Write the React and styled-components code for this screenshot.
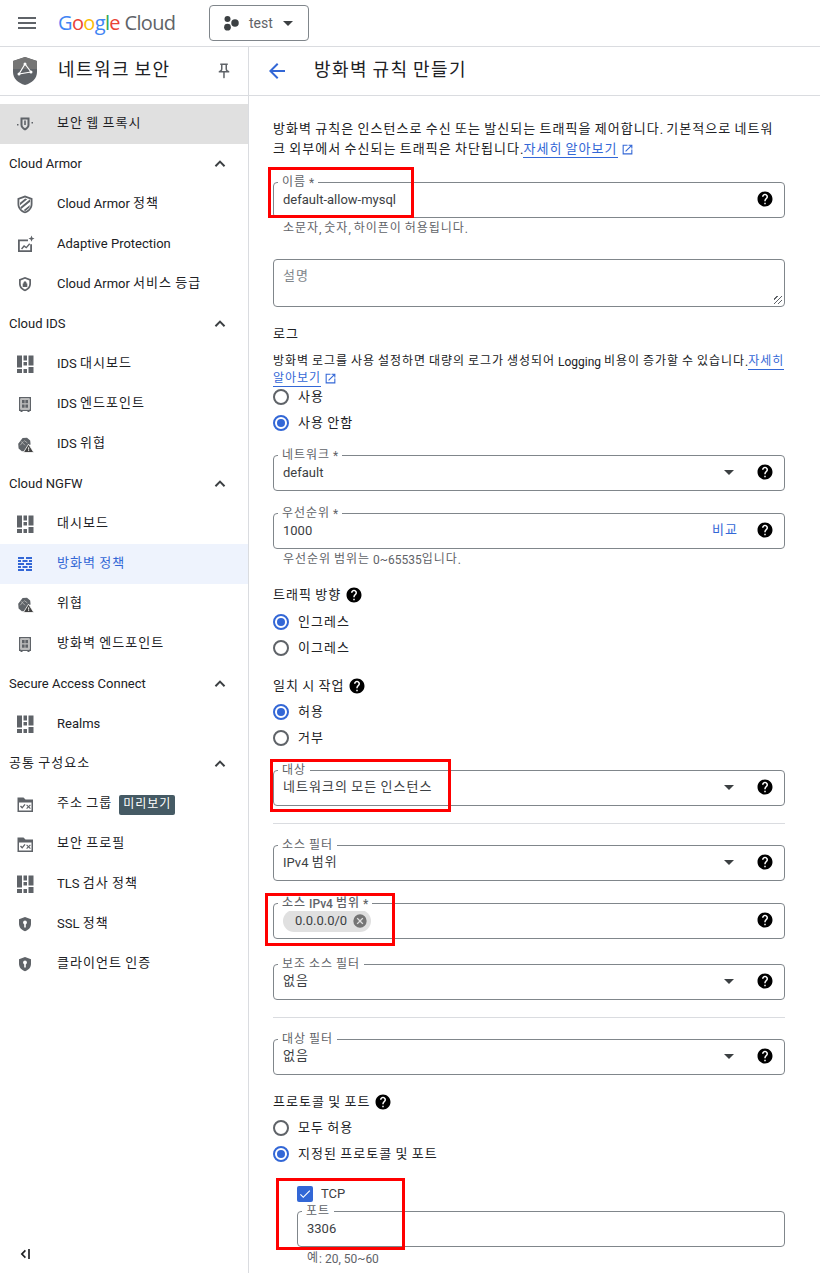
import React from 'react';
import styled, { createGlobalStyle } from 'styled-components';

const FONT = `Roboto, "Noto Sans CJK KR", sans-serif`;
const BLUE = '#3367d6';

const GlobalStyle = createGlobalStyle`
  html, body {
    margin: 0;
    height: 100%;
    overflow: hidden;
    background: #fff;
  }
  body {
    font-family: ${FONT};
    font-size: 13px;
    line-height: 20px;
    color: #202124;
  }
`;

// hangul in the screenshot runs wider and a bit higher than Noto
const HangulRun = styled.span`
  display: inline-block;
  letter-spacing: 0.08em;
  transform: translateY(-1px);
`;

const Ko = ({ children }) =>
  String(children)
    .split(/([\uac00-\ud7a3]+)/)
    .map((part, i) => (i % 2 ? <HangulRun key={i}>{part}</HangulRun> : part));

// ---- icons ----
const Svg = styled.svg`
  display: block;
  flex: none;
  fill: ${(p) => p.$color || '#5f6368'};
`;

const Icon = ({ size = 24, color, children }) => (
  <Svg $color={color} width={size} height={size} viewBox="0 0 24 24">
    {children}
  </Svg>
);

const HelpIcon = () => (
  <Icon size={18} color="#000">
    <path d="M12 2C6.48 2 2 6.48 2 12s4.48 10 10 10 10-4.48 10-10S17.52 2 12 2zm1 17h-2v-2h2v2zm2.07-7.75l-.9.92C13.45 12.9 13 13.5 13 15h-2v-.5c0-1.1.45-2.1 1.17-2.83l1.24-1.26c.37-.36.59-.86.59-1.41 0-1.1-.9-2-2-2s-2 .9-2 2H8c0-2.21 1.79-4 4-4s4 1.79 4 4c0 .88-.36 1.68-.93 2.25z" />
  </Icon>
);

const ProxyIcon = () => (
  <Icon>
    <path d="M7.500 5.500h9v7.500c0 2.300-1.900 4.200-4.500 5.500-2.600-1.300-4.500-3.200-4.500-5.500V5.500zm2 2V13c0 1.200 1 2.300 2.500 3.200 1.500-.9 2.500-2 2.500-3.200V7.500h-5z" />
    <rect x="11.200" y="8.500" width="1.600" height="4.500" />
    <rect x="4" y="12" width="1.500" height="1.500" />
    <rect x="18.500" y="10" width="1.500" height="1.500" />
  </Icon>
);

const ArmorIcon = () => (
  <Icon>
    <path d="M12 3.500l7.500 2.800v5.700c0 4.500-3.100 8.100-7.500 9.200-4.400-1.100-7.500-4.700-7.500-9.200V6.300L12 3.500zm0 1.900L6.300 7.500V12c0 3.500 2.300 6.400 5.700 7.400 3.400-1 5.700-3.900 5.700-7.400V7.500L12 5.400z" />
    <path d="M7 10.800l5.200-4.300 2 .7L7 13.200zM7.300 15.200l9.700-7.900.2 2.500-9 7.200zM10.500 18.200l6.500-5.300-.7 2.900-3.900 3.200z" />
  </Icon>
);

const AdaptiveIcon = () => (
  <Icon>
    <path d="M5 7.500h10v1.800H6.800v9h10.400v-6H19V20H5z" />
    <path d="M8 16.500l3-3.500 2.200 1.700 3-3.400 1 .9-3.800 4.400-2.200-1.700-2.100 2.500z" />
    <path d="M18.500 3.500l.9 2.200 2.100.9-2.100.9-.9 2.200-.9-2.200-2.100-.9 2.100-.9z" />
  </Icon>
);

const TierIcon = () => (
  <Icon>
    <path d="M12 5l6 2.300v4.500c0 3.600-2.500 6.500-6 7.400-3.500-.9-6-3.800-6-7.400V7.300L12 5zm0 1.800L7.700 8.400v3.400c0 2.700 1.800 4.900 4.300 5.700 2.500-.8 4.300-3 4.300-5.700V8.400L12 6.800z" />
    <path d="M9.700 11.500h.8v-.7a1.500 1.500 0 013 0v.7h.8v3.500H9.700z" />
  </Icon>
);

const DashIcon = () => (
  <Icon>
    <rect x="4" y="3.500" width="5" height="12" />
    <rect x="4" y="17" width="5" height="4" />
    <rect x="10.500" y="3.500" width="3.500" height="5" />
    <rect x="10.500" y="10" width="3.500" height="3.500" />
    <rect x="10.500" y="17" width="3.500" height="4" />
    <rect x="15.500" y="3.500" width="5" height="10" />
    <rect x="15.500" y="15" width="5" height="6" />
  </Icon>
);

const EndpointIcon = () => (
  <Icon>
    <path d="M6 5h12v14h-1.500v1h-2v-1h-5v1h-2v-1H6V5zm1.500 1.500v11h9v-11h-9z" />
    <rect x="7.500" y="6.500" width="9" height="11" fill="#bdbdbd" />
    <rect x="9" y="8" width="2.600" height="3.200" />
    <rect x="12.400" y="8" width="2.600" height="3.200" />
    <rect x="9" y="12.500" width="2.600" height="3.200" />
    <rect x="12.400" y="12.500" width="2.600" height="3.200" />
  </Icon>
);

const ThreatIcon = () => (
  <Icon>
    <g transform="translate(12 12.500) scale(.8) translate(-12 -12)">
      <path d="M9 4l5.500-.5 4 3.500.5 5-3 1.500-4.500 7H8L4 17 3.500 11z" />
      <path d="M7 8l5 5M6 13l4-5M11 7l4 3" stroke="#bdbdbd" strokeWidth="1" fill="none" />
      <path d="M16.500 11.500l6.500 10.500H10z" fill="#424242" stroke="#fff" strokeWidth="1" />
      <rect x="16" y="15.500" width="1.200" height="3" fill="#fff" />
      <rect x="16" y="19" width="1.200" height="1.200" fill="#fff" />
    </g>
  </Icon>
);

const FirewallIcon = () => (
  <Icon color={BLUE}>
    <path d="M5 5h6v2H5zM13 5h6v2h-6zM5 8h3v2H5zM9.500 8h5v2h-5zM16 8h3v2h-3zM5 11h6v2H5zM13 11h6v2h-6zM5 14h3v2H5zM9.500 14h5v2h-5zM16 14h3v2h-3zM5 17h6v2H5zM13 17h6v2h-6z" />
  </Icon>
);

const FolderIcon = () => (
  <Icon>
    <path d="M4.500 5.500h6l2 2H20V20H4.500V5.500zm1.500 5V18.500h12.500v-8H6z" />
    <path d="M7 14.500l1-1 1.200 1.300 2.300-2.800 1 .8-3.300 4z" />
    <path d="M14 12.500l1.500 1.500 1.500-1.500.8.8-1.500 1.500 1.500 1.500-.8.8-1.500-1.500-1.500 1.500-.8-.8 1.500-1.500-1.500-1.500z" />
  </Icon>
);

const SslIcon = () => (
  <Icon>
    <path d="M12 5l6 2.300v4.500c0 3.600-2.500 6.500-6 7.400-3.500-.9-6-3.800-6-7.400V7.300L12 5z" />
    <circle cx="12" cy="10.500" r="1.900" fill="#fff" />
    <rect x="11.200" y="11" width="1.600" height="4.500" fill="#fff" />
  </Icon>
);

const Chevron = () => (
  <Icon size={20} color="#3c4043">
    <path d="M12 7.500l6.300 6.300-1.700 1.700-4.600-4.600-4.600 4.600-1.700-1.700z" />
  </Icon>
);

const ICONS = {
  armor: ArmorIcon,
  adaptive: AdaptiveIcon,
  tier: TierIcon,
  dash: DashIcon,
  endpoint: EndpointIcon,
  threat: ThreatIcon,
  firewall: FirewallIcon,
  folder: FolderIcon,
  ssl: SslIcon,
};

const NAV = [
  { title: 'Cloud Armor', items: [
    { icon: 'armor', label: 'Cloud Armor 정책' },
    { icon: 'adaptive', label: 'Adaptive Protection' },
    { icon: 'tier', label: 'Cloud Armor 서비스 등급' },
  ] },
  { title: 'Cloud IDS', items: [
    { icon: 'dash', label: 'IDS 대시보드' },
    { icon: 'endpoint', label: 'IDS 엔드포인트' },
    { icon: 'threat', label: 'IDS 위협' },
  ] },
  { title: 'Cloud NGFW', items: [
    { icon: 'dash', label: '대시보드' },
    { icon: 'firewall', label: '방화벽 정책', active: true },
    { icon: 'threat', label: '위협' },
    { icon: 'endpoint', label: '방화벽 엔드포인트' },
  ] },
  { title: 'Secure Access Connect', items: [
    { icon: 'dash', label: 'Realms' },
  ] },
  { title: '공통 구성요소', items: [
    { icon: 'folder', label: '주소 그룹', badge: '미리보기' },
    { icon: 'folder', label: '보안 프로필' },
    { icon: 'dash', label: 'TLS 검사 정책' },
    { icon: 'ssl', label: 'SSL 정책' },
    { icon: 'ssl', label: '클라이언트 인증' },
  ] },
];

// ---- page frame ----
const Shell = styled.div`
  display: grid;
  grid-template-columns: 249px 1fr;
  grid-template-rows: 47px 1fr;
  height: 100vh;
  overflow: hidden;
`;

const TopBar = styled.header`
  grid-column: 1 / 3;
  display: flex;
  align-items: center;
  border-bottom: 1px solid #dadce0;
  padding-left: 18px;
`;

const Menu = styled.div`
  width: 18px;
  height: 12px;
  margin-right: 22px;
  border-top: 2px solid #5f6368;
  border-bottom: 2px solid #5f6368;
  position: relative;
  box-sizing: border-box;
  &::after {
    content: '';
    position: absolute;
    left: 0;
    right: 0;
    top: 3px;
    height: 2px;
    background: #5f6368;
  }
`;

const Logo = styled.div`
  font-family: "Open Sans", sans-serif;
  font-size: 20px;
  letter-spacing: -0.65px;
  width: 116px;
  margin-right: 35px;
  white-space: nowrap;
  color: #5f6368;
`;

const LogoLetter = styled.span`
  color: ${(p) => p.$color};
  font-weight: 500;
`;

const ProjectButton = styled.div`
  display: flex;
  align-items: center;
  box-sizing: border-box;
  width: 100px;
  height: 36px;
  border: 1px solid #80868b;
  border-radius: 4px;
  padding-left: 13px;
  color: #5f6368;
  font-size: 14px;
`;

const ProjectName = styled.span`
  margin-left: 8px;
  margin-right: 10px;
`;

const Caret = styled.span`
  width: 0;
  height: 0;
  border-left: 5px solid transparent;
  border-right: 5px solid transparent;
  border-top: 5px solid #3c4043;
  flex: none;
`;

const Sidebar = styled.aside`
  border-right: 1px solid #dadce0;
  display: flex;
  flex-direction: column;
  min-height: 0;
`;

const SideHead = styled.div`
  height: 48px;
  flex: none;
  border-bottom: 1px solid #dadce0;
  display: flex;
  align-items: center;
  padding-left: 12px;
  font-size: 18px;
`;

const SideTitle = styled.span`
  margin-left: 20px;
  flex: 1;
`;

const PinWrap = styled.span`
  margin-right: 15px;
`;

const NavList = styled.nav`
  margin-top: 8px;
  flex: 1;
`;

const NavItem = styled.div`
  height: 40px;
  display: flex;
  align-items: center;
  padding-left: 13px;
  background: ${(p) => (p.$selected ? '#e0e0e0' : p.$active ? '#eef3fd' : 'transparent')};
  color: ${(p) => (p.$active ? BLUE : '#202124')};
`;

const NavLabel = styled.span`
  margin-left: 20px;
  white-space: nowrap;
`;

const Badge = styled.span`
  margin: 2px 0 0 7px;
  background: #455a64;
  color: #fff;
  border-radius: 2px;
  font-size: 12px;
  line-height: 20px;
  padding: 0 4px;
`;

const NavSection = styled.div`
  height: 40px;
  display: flex;
  align-items: center;
  justify-content: space-between;
  padding: 0 18px 0 9px;
`;

const Collapse = styled.div`
  height: 38px;
  padding-left: 14px;
  display: flex;
  align-items: center;
  flex: none;
`;

// ---- form ----
const Main = styled.main`
  display: flex;
  flex-direction: column;
  min-height: 0;
`;

const MainHead = styled.div`
  height: 48px;
  flex: none;
  border-bottom: 1px solid #dadce0;
  display: flex;
  align-items: center;
  padding-left: 16px;
`;

const MainTitle = styled.h1`
  margin: 0 0 0 25px;
  font-size: 18px;
  line-height: 24px;
  font-weight: 400;
`;

const Form = styled.div`
  padding: 24px 35px 0 24px;
  width: 512px;
`;

const Para = styled.p`
  margin: ${(p) => p.$mt || 0}px -20px 0 0;
  font-size: ${(p) => p.$fs || 13}px;
  line-height: ${(p) => p.$lh || 20}px;
  white-space: nowrap;
`;

const LearnLink = styled.span`
  color: ${BLUE};
  border-bottom: 1px solid ${BLUE};
`;

const ExternalWrap = styled.span`
  display: inline-block;
  vertical-align: -2px;
  margin-left: 3px;
`;

const Outlined = styled.div`
  position: relative;
  box-sizing: border-box;
  height: ${(p) => p.$h || 36}px;
  margin-top: ${(p) => p.$mt || 0}px;
  border: 1px solid #80868b;
  border-radius: 4px;
  padding: 0 10px 2px 9px;
  display: flex;
  align-items: ${(p) => (p.$top ? 'flex-start' : 'center')};
  gap: 8px;
`;

const FloatLabel = styled.label`
  position: absolute;
  left: 4px;
  top: -7px;
  padding: 0 4px;
  background: #fff;
  font-size: 12px;
  line-height: 14px;
  color: #5f6368;
  font-weight: ${(p) => (p.$strong ? 500 : 400)};
`;

const Value = styled.span`
  flex: 1;
  margin-top: 2px;
  color: #3c4043;
`;

const Placeholder = styled.span`
  flex: 1;
  margin-top: 7px;
  color: #80868b;
`;

const CompareLink = styled.span`
  color: ${BLUE};
  margin: 2px 10px 0 0;
`;

const CaretSlot = styled.span`
  display: flex;
  margin-right: 14px;
`;

const Grip = styled.span`
  position: absolute;
  right: 2px;
  bottom: 2px;
  width: 8px;
  height: 8px;
  background: repeating-linear-gradient(135deg, transparent 0 2px, #5f6368 2px 3px);
`;

const Hint = styled.div`
  margin: ${(p) => p.$mt || 3}px 0 0 10px;
  font-size: 12px;
  line-height: 16px;
  color: #5f6368;
`;

const Heading = styled.div`
  margin-top: ${(p) => p.$mt || 0}px;
  line-height: 20px;
  display: flex;
  align-items: center;
  gap: 4px;
`;

const HeadingText = styled.span`
  margin-top: 2px;
`;

const HelpSmall = styled.span`
  display: flex;
`;

const RadioGroup = styled.div`
  margin-top: ${(p) => p.$mt || 0}px;
`;

const RadioRow = styled.div`
  height: 26px;
  display: flex;
  align-items: center;
  gap: 9px;
`;

const RadioText = styled.span`
  margin-top: 1px;
`;

const RadioMark = styled.span`
  box-sizing: border-box;
  width: 16px;
  height: 16px;
  border-radius: 50%;
  border: 2px solid ${(p) => (p.$on ? BLUE : '#5f6368')};
  display: flex;
  align-items: center;
  justify-content: center;
  &::after {
    content: '';
    display: ${(p) => (p.$on ? 'block' : 'none')};
    width: 8px;
    height: 8px;
    border-radius: 50%;
    background: ${BLUE};
  }
`;

const Divider = styled.hr`
  border: 0;
  height: 1px;
  background: #dadce0;
  margin: 17px 0 21px;
`;

const Chip = styled.span`
  display: inline-flex;
  align-items: center;
  height: 22px;
  padding: 0 3px 0 12px;
  border-radius: 11px;
  background: #e0e0e0;
  color: #3c4043;
  margin: 2px auto 0 0;
  gap: 5px;
`;

const ChipClose = styled.span`
  display: flex;
`;

const RedFrame = styled.span`
  position: absolute;
  box-sizing: border-box;
  left: ${(p) => p.$l}px;
  top: ${(p) => p.$t}px;
  width: ${(p) => p.$w}px;
  height: ${(p) => p.$h}px;
  border: 3px solid #f00;
  pointer-events: none;
`;

const PortBlock = styled.div`
  position: relative;
  margin: 17px 0 0 24px;
`;

const CheckRow = styled.div`
  display: flex;
  align-items: center;
  height: 20px;
  gap: 8px;
  color: #3c4043;
`;

const CheckBox = styled.span`
  width: 16px;
  height: 16px;
  border-radius: 2px;
  background: ${BLUE};
  display: flex;
  align-items: center;
  justify-content: center;
`;

const Select = ({ label, value, mt, children }) => (
  <Outlined $mt={mt}>
    <FloatLabel><Ko>{label}</Ko></FloatLabel>
    <Value><Ko>{value}</Ko></Value>
    <CaretSlot><Caret /></CaretSlot>
    <HelpIcon />
    {children}
  </Outlined>
);

const Radios = ({ mt, options, value }) => (
  <RadioGroup $mt={mt}>
    {options.map((o) => (
      <RadioRow key={o}>
        <RadioMark $on={o === value} />
        <RadioText><Ko>{o}</Ko></RadioText>
      </RadioRow>
    ))}
  </RadioGroup>
);

const External = () => (
  <ExternalWrap>
    <Icon size={13} color={BLUE}>
      <path d="M19 19H5V5h7V3H3v18h18v-9h-2v7zM14 3v2h3.590l-9.830 9.830 1.410 1.410L19 6.410V10h2V3h-7z" />
    </Icon>
  </ExternalWrap>
);

export default function App() {
  return (
    <>
      <GlobalStyle />
      <Shell>
        <TopBar>
          <Menu />
          <Logo>
            <LogoLetter $color="#4285f4">G</LogoLetter>
            <LogoLetter $color="#ea4335">o</LogoLetter>
            <LogoLetter $color="#fbbc05">o</LogoLetter>
            <LogoLetter $color="#4285f4">g</LogoLetter>
            <LogoLetter $color="#34a853">l</LogoLetter>
            <LogoLetter $color="#ea4335">e</LogoLetter>
            {' Cloud'}
          </Logo>
          <ProjectButton>
            <Icon size={18} color="#3c4043">
              <circle cx="6" cy="6.500" r="4" />
              <circle cx="6" cy="17.500" r="4.500" />
              <circle cx="16" cy="12" r="5" />
            </Icon>
            <ProjectName>test</ProjectName>
            <Caret />
          </ProjectButton>
        </TopBar>

        <Sidebar>
          <SideHead>
            <Svg width="26" height="30" viewBox="0 0 26 30">
              <path d="M13 1L25 5v11c0 6.500-5 11-12 13C6 27 1 22.500 1 16V5z" fill="#5f6368" />
              <path d="M13 1L25 5v8H1V5z" fill="#757575" />
              <path d="M13 8l6 8M7 18l6-10M7 18l12-2" stroke="#fff" strokeWidth="1.200" fill="none" />
              <circle cx="13" cy="8" r="1.500" fill="#fff" />
              <circle cx="19" cy="16" r="1.500" fill="#fff" />
              <circle cx="7" cy="18" r="1.500" fill="#fff" />
            </Svg>
            <SideTitle><Ko>네트워크 보안</Ko></SideTitle>
            <PinWrap>
              <Icon size={18} color="#5f6368">
                <path d="M16 9V4h1V2H7v2h1v5c0 1.660-1.340 3-3 3v2h5.970v7l1 1 1-1v-7H19v-2c-1.660 0-3-1.340-3-3zm-6 0V4h4v5c0 1.100.32 2.120.88 3H9.120c.56-.88.88-1.900.88-3z" />
              </Icon>
            </PinWrap>
          </SideHead>
          <NavList>
            <NavItem $selected>
              <ProxyIcon />
              <NavLabel><Ko>보안 웹 프록시</Ko></NavLabel>
            </NavItem>
            {NAV.map((group) => (
              <React.Fragment key={group.title}>
                <NavSection>
                  <span><Ko>{group.title}</Ko></span>
                  <Chevron />
                </NavSection>
                {group.items.map((item) => {
                  const ItemIcon = ICONS[item.icon];
                  return (
                    <NavItem key={item.label} $active={item.active}>
                      <ItemIcon />
                      <NavLabel><Ko>{item.label}</Ko></NavLabel>
                      {item.badge && <Badge><Ko>{item.badge}</Ko></Badge>}
                    </NavItem>
                  );
                })}
              </React.Fragment>
            ))}
          </NavList>
          <Collapse>
            <Icon size={20} color="#202124">
              <path d="M13 7l1.400 1.400L10.800 12l3.600 3.600L13 17l-5-5zM17 6h2v12h-2z" />
            </Icon>
          </Collapse>
        </Sidebar>

        <Main>
          <MainHead>
            <Icon size={24} color={BLUE}>
              <path d="M20 11H7.830l5.590-5.590L12 4l-8 8 8 8 1.410-1.410L7.830 13H20v-2z" />
            </Icon>
            <MainTitle><Ko>방화벽 규칙 만들기</Ko></MainTitle>
          </MainHead>
          <Form>
            <Para>
              <Ko>방화벽 규칙은 인스턴스로 수신 또는 발신되는 트래픽을 제어합니다. 기본적으로 네트워</Ko>
              <br />
              <Ko>크 외부에서 수신되는 트래픽은 차단됩니다.</Ko><LearnLink><Ko>자세히 알아보기</Ko></LearnLink>
              <External />
            </Para>

            <Outlined $mt={22}>
              <FloatLabel><Ko>이름 *</Ko></FloatLabel>
              <Value>default-allow-mysql</Value>
              <HelpIcon />
              <RedFrame $l={-6} $t={-16} $w={146} $h={51} />
            </Outlined>
            <Hint><Ko>소문자, 숫자, 하이픈이 허용됩니다.</Ko></Hint>

            <Outlined $mt={22} $h={48} $top>
              <Placeholder><Ko>설명</Ko></Placeholder>
              <Grip />
            </Outlined>

            <Heading $mt={16}><HeadingText><Ko>로그</Ko></HeadingText></Heading>
            <Para $mt={9} $lh={17} $fs={12}>
              <Ko>방화벽 로그를 사용 설정하면 대량의 로그가 생성되어 Logging 비용이 증가할 수 있습니다.</Ko><LearnLink><Ko>자세히</Ko></LearnLink>
              <br />
              <LearnLink><Ko>알아보기</Ko></LearnLink>
              <External />
            </Para>
            <Radios mt={-4} options={['사용', '사용 안함']} value="사용 안함" />

            <Select mt={19} label="네트워크 *" value="default" />
            <Outlined $mt={22}>
              <FloatLabel><Ko>우선순위 *</Ko></FloatLabel>
              <Value>1000</Value>
              <CompareLink><Ko>비교</Ko></CompareLink>
              <HelpIcon />
            </Outlined>
            <Hint><Ko>우선순위 범위는 0~65535입니다.</Ko></Hint>

            <Heading $mt={16}>
              <HeadingText><Ko>트래픽 방향</Ko></HeadingText>
              <HelpSmall><HelpIcon /></HelpSmall>
            </Heading>
            <Radios mt={3} options={['인그레스', '이그레스']} value="인그레스" />

            <Heading $mt={14}>
              <HeadingText><Ko>일치 시 작업</Ko></HeadingText>
              <HelpSmall><HelpIcon /></HelpSmall>
            </Heading>
            <Radios mt={2} options={['허용', '거부']} value="허용" />

            <Select mt={19} label="대상" value="네트워크의 모든 인스턴스">
              <RedFrame $l={-4} $t={-12} $w={181} $h={53} />
            </Select>
            <Divider />

            <Select label="소스 필터" value="IPv4 범위" />
            <Outlined $mt={22}>
              <FloatLabel $strong><Ko>소스 IPv4 범위 *</Ko></FloatLabel>
              <Chip>
                0.0.0.0/0
                <ChipClose>
                  <Icon size={16} color="#757575">
                    <path d="M12 2a10 10 0 100 20 10 10 0 000-20zm5 13.590L15.590 17 12 13.410 8.410 17 7 15.590 10.590 12 7 8.410 8.410 7 12 10.590 15.590 7 17 8.410 13.410 12 17 15.590z" />
                  </Icon>
                </ChipClose>
              </Chip>
              <HelpIcon />
              <RedFrame $l={-9} $t={-11} $w={130} $h={53} />
            </Outlined>
            <Select mt={25} label="보조 소스 필터" value="없음" />
            <Divider />

            <Select label="대상 필터" value="없음" />

            <Heading $mt={16}>
              <HeadingText><Ko>프로토콜 및 포트</Ko></HeadingText>
              <HelpSmall><HelpIcon /></HelpSmall>
            </Heading>
            <Radios mt={2} options={['모두 허용', '지정된 프로토콜 및 포트']} value="지정된 프로토콜 및 포트" />

            <PortBlock>
              <CheckRow>
                <CheckBox>
                  <Icon size={14} color="#fff">
                    <path d="M9 16.170L4.830 12l-1.420 1.410L9 19 21 7l-1.410-1.410z" />
                  </Icon>
                </CheckBox>
                TCP
              </CheckRow>
              <Outlined $mt={7}>
                <FloatLabel><Ko>포트</Ko></FloatLabel>
                <Value>3306</Value>
              </Outlined>
              <Hint $mt={4}><Ko>예: 20, 50~60</Ko></Hint>
              <RedFrame $l={-21} $t={-6} $w={129} $h={72} />
            </PortBlock>
          </Form>
        </Main>
      </Shell>
    </>
  );
}
